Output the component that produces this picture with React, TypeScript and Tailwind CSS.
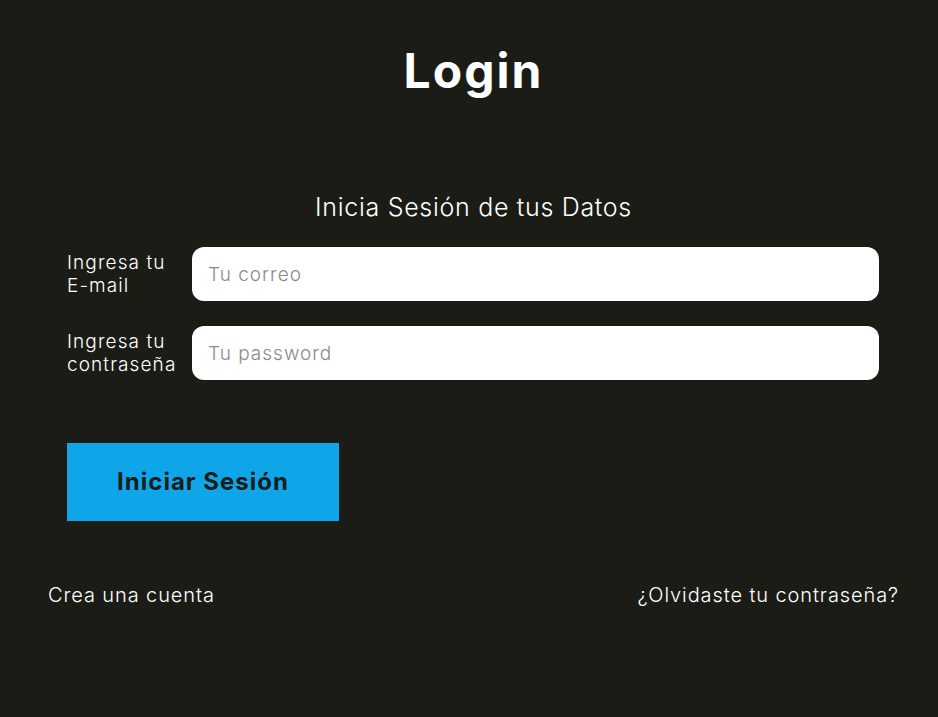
import React from "react";

export default function App() {
  const font = { fontFamily: "Inter, 'Open Sans', sans-serif" };
  return (
    <div style={font} className="min-h-[717px] w-full bg-[#1c1c17] pl-[9px] text-white">
      <div className="flex flex-col">
        <h1 className="mt-[41px] h-[60px] text-center text-[48px] font-bold leading-[60px] tracking-[2px]">Login</h1>
        <p className="mt-[91px] text-center text-[25px] font-light leading-[30px] tracking-[0.7px]">Inicia Sesión de tus Datos</p>
        <div className="ml-[58px] mr-[59px] mt-[25px] flex flex-col gap-[25px]">
          <div className="flex items-center">
            <label className="w-[125px] text-[19px] font-light leading-[23px] tracking-[1.1px]">Ingresa tu<br />E-mail</label>
            <input
              type="text"
              placeholder="Tu correo"
              className="h-[54px] flex-1 rounded-[12px] bg-white px-[16px] text-[19px] font-light tracking-[1px] text-black outline-none placeholder:text-[#8a8a8a]"
            />
          </div>
          <div className="flex items-center">
            <label className="w-[125px] text-[19px] font-light leading-[23px] tracking-[1.1px]">Ingresa tu<br />contraseña</label>
            <input
              type="password"
              placeholder="Tu password"
              className="h-[54px] flex-1 rounded-[12px] bg-white px-[16px] text-[19px] font-light tracking-[1px] text-black outline-none placeholder:text-[#8a8a8a]"
            />
          </div>
          <button className="mt-[38px] h-[78px] w-[272px] bg-[#0ea5e9] text-[24px] font-bold tracking-[1px] text-[#1c1c17]">Iniciar Sesión</button>
        </div>
        <div className="ml-[39px] mr-[39px] mt-[60px] flex justify-between text-[20px] font-light leading-[28px] tracking-[0.9px]">
          <a>Crea una cuenta</a>
          <a>¿Olvidaste tu contraseña?</a>
        </div>
      </div>
    </div>
  );
}
